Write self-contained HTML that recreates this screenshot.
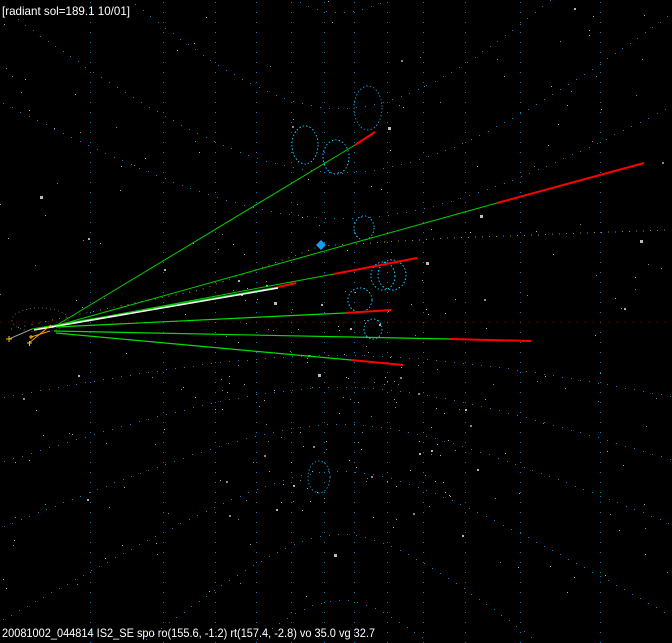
<!DOCTYPE html>
<html><head><meta charset="utf-8"><style>
html,body{margin:0;padding:0;background:#000;width:672px;height:643px;overflow:hidden;}
svg{display:block}
text{font-family:"Liberation Sans","Noto Sans CJK JP",sans-serif;font-size:12px;fill:#fff}
</style></head><body>
<svg id="s" width="672" height="643" viewBox="0 0 672 643" xmlns="http://www.w3.org/2000/svg" shape-rendering="crispEdges">
<rect width="672" height="643" fill="#000"/>
<g id="grid"></g>
<g id="stars" fill="#b0b0b0"></g>
<line x1="0" y1="322" x2="672" y2="322" stroke="#8a0000" stroke-dasharray="1 7"/>
<polyline points="11,329 100,310 200,290 321,246 450,238 669,230" fill="none" stroke="#a09000" stroke-dasharray="1 6"/>
<g fill="none" stroke="#10c0ff" stroke-dasharray="1.5 2">
<ellipse cx="305" cy="145" rx="13" ry="19"/>
<ellipse cx="336" cy="157" rx="13" ry="17"/>
<ellipse cx="368" cy="108" rx="14" ry="22" stroke="#0a8ac0"/>
<ellipse cx="364" cy="228" rx="10" ry="12"/>
<ellipse cx="383" cy="276" rx="12" ry="14"/>
<ellipse cx="392" cy="275" rx="14" ry="15"/>
<ellipse cx="360" cy="300" rx="12" ry="12"/>
<ellipse cx="373" cy="329" rx="9" ry="10"/>
<ellipse cx="319" cy="477" rx="11" ry="16" stroke="#0a8ac0"/>
<ellipse cx="40" cy="320" rx="28" ry="12" stroke="#555" stroke-dasharray="1 3"/>
</g>
<g shape-rendering="auto">
<line x1="52" y1="328" x2="355" y2="145" stroke="#00d000" stroke-width="1"/>
<line x1="355" y1="145" x2="375" y2="132" stroke="#ff0000" stroke-width="2"/>
<line x1="55" y1="326" x2="497" y2="203" stroke="#00d000"/>
<line x1="497" y1="203" x2="644" y2="163" stroke="#ff0000" stroke-width="2"/>
<line x1="55" y1="326" x2="334" y2="274" stroke="#00d000"/>
<line x1="334" y1="274" x2="417" y2="258" stroke="#ff0000" stroke-width="2"/>
<line x1="32" y1="329" x2="278" y2="287" stroke="#00d000" stroke-width="1"/>
<line x1="34" y1="330" x2="278" y2="288" stroke="#ffffff" stroke-width="1.5"/>
<line x1="278" y1="287" x2="296" y2="283" stroke="#ff0000" stroke-width="2"/>
<line x1="56" y1="327" x2="345" y2="313" stroke="#00e000" stroke-width="1.2"/>
<line x1="345" y1="313" x2="391" y2="310" stroke="#ff0000" stroke-width="2"/>
<line x1="54" y1="331" x2="450" y2="339" stroke="#00e000" stroke-width="1.2"/>
<line x1="450" y1="339" x2="531" y2="341" stroke="#ff0000" stroke-width="2"/>
<line x1="56" y1="333" x2="351" y2="360" stroke="#00e000" stroke-width="1.2"/>
<line x1="351" y1="360" x2="403" y2="365" stroke="#ff0000" stroke-width="2"/>
<line x1="9" y1="339" x2="32" y2="329" stroke="#999"/>
<line x1="29" y1="343" x2="51" y2="325" stroke="#ff9a00"/>
<line x1="31" y1="337" x2="50" y2="331" stroke="#ff9a00"/>
<path d="M321 240 L326 245 L321 250 L316 245Z" fill="#1a9af0"/>
</g>
<g stroke="#ffc000" stroke-width="1">
<path d="M6 339h6M9 336v6"/><path d="M27 343h5M29.5 341v5"/><path d="M29 337h4M31 335v4"/>
</g>
<text x="2" y="15" textLength="128" lengthAdjust="spacingAndGlyphs">[radiant sol=189.1 10/01]</text>
<text x="2" y="637" textLength="373" lengthAdjust="spacingAndGlyphs">20081002_044814 IS2_SE spo ro(155.6, -1.2) rt(157.4, -2.8) vo 35.0 vg 32.7</text>
</svg>
<script>
var NS="http://www.w3.org/2000/svg",g=document.getElementById("grid");
function dot(x,y){var e=document.createElementNS(NS,"rect");e.setAttribute("x",Math.round(x));e.setAttribute("y",Math.round(y));e.setAttribute("width",1);e.setAttribute("height",1);e.setAttribute("fill","#0880c8");g.appendChild(e);}
[90,163,215,256,291,324,354,387,423,465,520,600].forEach(function(x){for(var y=2;y<643;y+=10)dot(x,y);});
var curves=[[12,-0.8,60],[108,-1,150],[172,-0.85,200],[218,-0.6,200],[355,0.22,200],[387,0.34,150],[424,0.43,120],[471,0.59,100],[534,0.81,80],[600,1.0,70]];
curves.forEach(function(c){var last=null;for(var x=-5;x<=680;x+=0.5){var dx=x-340;var y=c[0]+(c[1]<0?-1:1)*Math.abs(c[1])*(Math.sqrt(c[2]*c[2]+dx*dx)-c[2]);
 if(y<-2||y>645)continue; if(last){var d=Math.hypot(x-last[0],y-last[1]);if(d<9)continue;} dot(x,y);last=[x,y];}});
var st=document.getElementById("stars"),seed=7;function r(){seed=(seed*16807)%2147483647;return seed/2147483647;}
for(var i=0;i<300;i++){var x=r()*672,y=r()*600,s=r()<0.08?2:1;if(r()<0.4){x=220+r()*240;y=280+r()*240;}
 var e=document.createElementNS(NS,"rect");e.setAttribute("x",Math.floor(x));e.setAttribute("y",Math.floor(y));e.setAttribute("width",s);e.setAttribute("height",s);if(r()<0.5)e.setAttribute("fill","#888");st.appendChild(e);}
[[388,127],[274,302],[318,374],[334,554],[426,262],[480,215],[640,240],[40,196]].forEach(function(p){var e=document.createElementNS(NS,"rect");e.setAttribute("x",p[0]);e.setAttribute("y",p[1]);e.setAttribute("width",3);e.setAttribute("height",3);e.setAttribute("fill","#bbb");st.appendChild(e);});
</script>
</body></html>
